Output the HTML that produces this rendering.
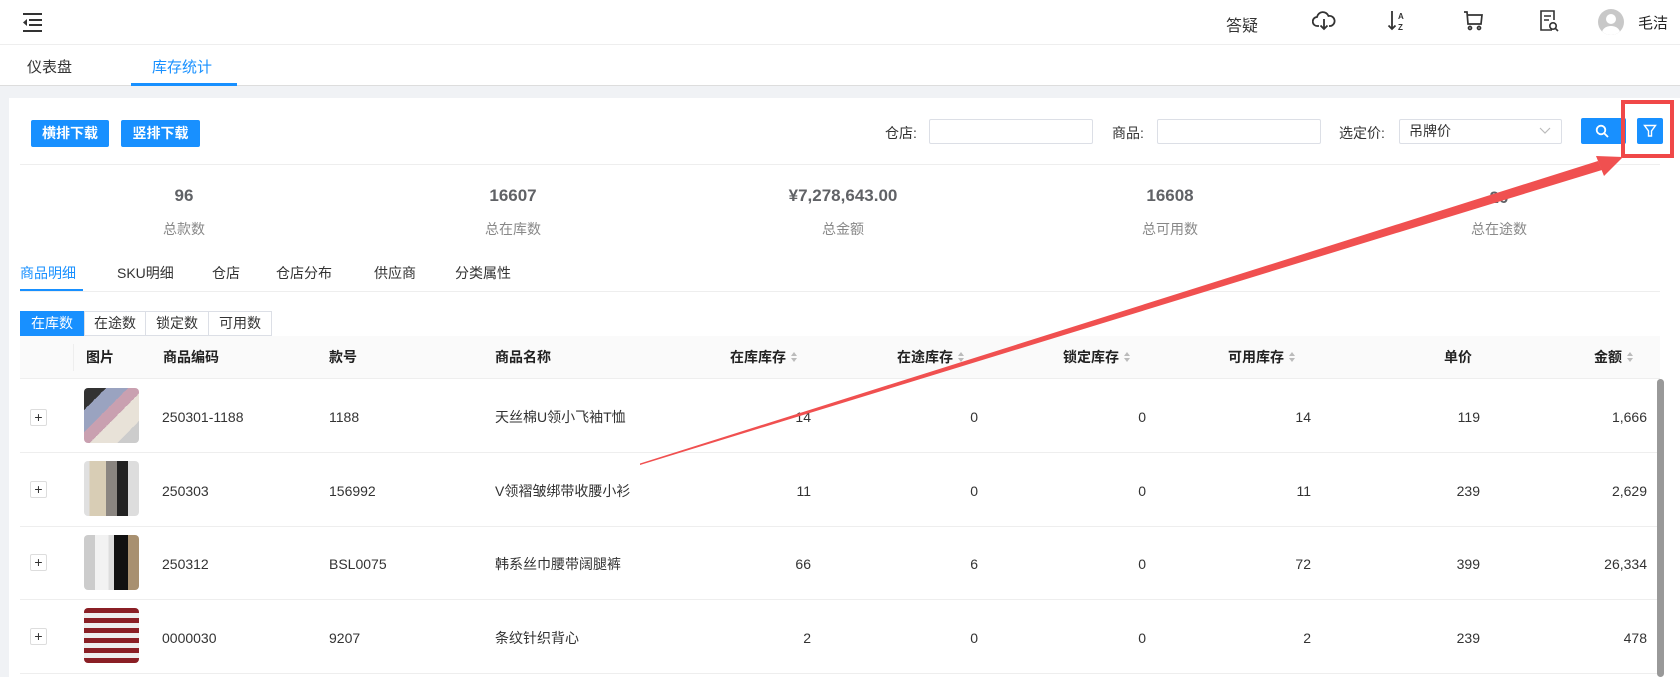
<!DOCTYPE html>
<html><head><meta charset="utf-8"><style>
*{box-sizing:border-box;margin:0;padding:0}
body{width:1680px;height:677px;overflow:hidden;background:#f0f2f5;font-family:"Liberation Sans","Noto Sans CJK SC",sans-serif;font-size:14px;color:#333;position:relative}
.abs{position:absolute}
.top{left:0;top:0;width:1680px;height:45px;background:#fff;border-bottom:1px solid #eee}
.tabs{left:0;top:45px;width:1680px;height:41px;background:#fff;border-bottom:1px solid #ddd}
.card{left:9px;top:98px;width:1671px;height:579px;background:#fff}
.btn{background:#1890ff;color:#fff;height:27px;line-height:27px;text-align:center;border-radius:2px;font-size:14px;font-weight:bold}
.inp{height:25px;border:1px solid #dcdfe6;border-radius:2px;background:#fff}
.lbl{font-size:14px;color:#333}
.num{font-size:17px;color:#606266;font-weight:bold;transform:translateX(-50%)}
.sl{font-size:14px;color:#888;transform:translateX(-50%)}
.st{top:263px;font-size:14px;color:#333}
.seg{top:311px;height:25px;line-height:23px;border:1px solid #dcdfe6;text-align:center;font-size:14px;background:#fff}
.th{top:336px;height:43px;line-height:43px;font-weight:bold;color:#222;font-size:14px}
.td{font-size:14px;color:#333;line-height:20px}
.r{text-align:right}
.sort{display:inline-block;width:8px;vertical-align:middle;margin-left:4px}
.plus{width:17px;height:17px;border:1px solid #ddd;border-radius:2px;font-size:14px;line-height:14px;text-align:center;color:#333}
.img{width:55px;height:55px;border-radius:4px}
.hl{height:1px;background:#eee;left:20px;width:1637px}
</style></head><body>
<div class="abs top"></div>
<svg class="abs" style="left:22px;top:11px" width="22" height="22" viewBox="0 0 22 22"><rect x="1" y="2" width="19" height="2" fill="#333"/><rect x="7" y="8" width="13" height="2" fill="#333"/><rect x="7" y="13" width="13" height="2" fill="#333"/><rect x="1" y="19" width="19" height="2" fill="#333"/><path d="M5 8 L1 11.5 L5 15Z" fill="#333"/></svg>
<div class="abs" style="left:1226px;top:12px;font-size:16px;color:#333">答疑</div>
<svg class="abs" style="left:1312px;top:10px" width="24" height="22" viewBox="0 0 24 22" fill="none" stroke="#333" stroke-width="1.8"><path d="M7 16H5.5A4.5 4.5 0 0 1 5 7a6 6 0 0 1 11.5-1A4.5 4.5 0 0 1 18.5 16H17"/><path d="M12 9v10M8.5 15.5L12 19l3.5-3.5"/></svg>
<svg class="abs" style="left:1387px;top:9px" width="22" height="24" viewBox="0 0 22 24"><path d="M5 2v18M1.5 16.5L5 20l3.5-3.5" stroke="#333" stroke-width="1.8" fill="none"/><text x="11" y="10" font-size="8" font-weight="bold" fill="#333" font-family="Liberation Sans">A</text><text x="11" y="21" font-size="8" font-weight="bold" fill="#333" font-family="Liberation Sans">Z</text></svg>
<svg class="abs" style="left:1463px;top:10px" width="22" height="22" viewBox="0 0 22 22" fill="none" stroke="#333" stroke-width="1.7"><path d="M1 2h3l1 12h13l1-9H5"/><circle cx="7" cy="18" r="1.5"/><circle cx="16" cy="18" r="1.5"/></svg>
<svg class="abs" style="left:1538px;top:9px" width="22" height="24" viewBox="0 0 22 24" fill="none" stroke="#333" stroke-width="1.6"><path d="M14 21H3V2h13v9"/><path d="M6 7h7M6 11h5"/><circle cx="15" cy="17" r="3.2"/><path d="M17.3 19.3L20 22"/></svg>
<div class="abs" style="left:1598px;top:9px;width:26px;height:26px;border-radius:50%;background:#c8c8c8;overflow:hidden"><div class="abs" style="left:8px;top:5px;width:10px;height:10px;border-radius:50%;background:#fff"></div><div class="abs" style="left:4px;top:17px;width:18px;height:14px;border-radius:50%;background:#fff"></div></div>
<div class="abs" style="left:1638px;top:12px;font-size:15px;color:#222">毛洁</div>

<div class="abs tabs"></div>
<div class="abs" style="left:27px;top:56px;font-size:15px;color:#333">仪表盘</div>
<div class="abs" style="left:152px;top:56px;font-size:15px;color:#1890ff">库存统计</div>
<div class="abs" style="left:131px;top:83px;width:106px;height:3px;background:#1890ff"></div>

<div class="abs card"></div>
<div class="abs btn" style="left:31px;top:120px;width:78px">横排下载</div>
<div class="abs btn" style="left:121px;top:120px;width:79px">竖排下载</div>
<div class="abs lbl" style="left:885px;top:123px">仓店:</div>
<div class="abs inp" style="left:929px;top:119px;width:164px"></div>
<div class="abs lbl" style="left:1112px;top:123px">商品:</div>
<div class="abs inp" style="left:1157px;top:119px;width:164px"></div>
<div class="abs lbl" style="left:1339px;top:123px">选定价:</div>
<div class="abs inp" style="left:1399px;top:119px;width:163px;padding-left:9px;line-height:23px">吊牌价<svg class="abs" style="right:10px;top:7px" width="12" height="8" viewBox="0 0 12 8"><path d="M1 1l5 5 5-5" stroke="#bbb" fill="none" stroke-width="1.2"/></svg></div>
<div class="abs btn" style="left:1581px;top:118px;width:45px;height:26px;text-align:left;padding-left:14px"><svg style="margin-top:6px" width="14" height="14" viewBox="0 0 14 14" fill="none" stroke="#fff" stroke-width="1.8"><circle cx="6" cy="6" r="4.3"/><path d="M9.2 9.2L13 13"/></svg></div>
<div class="abs btn" style="left:1637px;top:118px;width:26px;height:26px"><svg style="margin-top:6px" width="14" height="14" viewBox="0 0 14 14" fill="none" stroke="#fff" stroke-width="1.4"><path d="M1.5 1.5h11L8.5 7v5h-3V7z"/></svg></div>
<div class="abs" style="left:1621px;top:100px;width:53px;height:58px;border:4px solid #f04848"></div>
<div class="abs" style="left:20px;top:164px;width:1640px;height:1px;background:#eee"></div>

<div class="abs num" style="left:184px;top:186px">96</div><div class="abs sl" style="left:184px;top:219px">总款数</div>
<div class="abs num" style="left:513px;top:186px">16607</div><div class="abs sl" style="left:513px;top:219px">总在库数</div>
<div class="abs num" style="left:843px;top:186px">¥7,278,643.00</div><div class="abs sl" style="left:843px;top:219px">总金额</div>
<div class="abs num" style="left:1170px;top:186px">16608</div><div class="abs sl" style="left:1170px;top:219px">总可用数</div>
<div class="abs num" style="left:1499px;top:188px">20</div><div class="abs sl" style="left:1499px;top:219px">总在途数</div>

<div class="abs st" style="left:20px;color:#1890ff">商品明细</div>
<div class="abs st" style="left:117px">SKU明细</div>
<div class="abs st" style="left:212px">仓店</div>
<div class="abs st" style="left:276px">仓店分布</div>
<div class="abs st" style="left:374px">供应商</div>
<div class="abs st" style="left:455px">分类属性</div>
<div class="abs" style="left:20px;top:291px;width:1640px;height:1px;background:#eee"></div>
<div class="abs" style="left:20px;top:289px;width:63px;height:2px;background:#1890ff"></div>

<div class="abs seg" style="left:20px;width:64px;background:#1890ff;border-color:#1890ff;color:#fff">在库数</div>
<div class="abs seg" style="left:84px;width:62px">在途数</div>
<div class="abs seg" style="left:146px;width:63px;border-left:none">锁定数</div>
<div class="abs seg" style="left:209px;width:63px;border-left:none">可用数</div>

<div class="abs" style="left:20px;top:336px;width:1640px;height:43px;background:#fafafa;border-bottom:1px solid #eee"></div>
<div class="abs" style="left:73px;top:344px;width:1px;height:27px;background:#eee"></div>
<div class="abs th" style="left:86px">图片</div>
<div class="abs th" style="left:163px">商品编码</div>
<div class="abs th" style="left:329px">款号</div>
<div class="abs th" style="left:495px">商品名称</div>
<div class="abs th" style="left:730px">在库库存<span class="sort"><svg width="8" height="12" viewBox="0 0 8 12"><path d="M4 1L7 5H1z" fill="#bbb"/><path d="M4 11L7 7H1z" fill="#bbb"/></svg></span></div>
<div class="abs th" style="left:897px">在途库存<span class="sort"><svg width="8" height="12" viewBox="0 0 8 12"><path d="M4 1L7 5H1z" fill="#bbb"/><path d="M4 11L7 7H1z" fill="#bbb"/></svg></span></div>
<div class="abs th" style="left:1063px">锁定库存<span class="sort"><svg width="8" height="12" viewBox="0 0 8 12"><path d="M4 1L7 5H1z" fill="#bbb"/><path d="M4 11L7 7H1z" fill="#bbb"/></svg></span></div>
<div class="abs th" style="left:1228px">可用库存<span class="sort"><svg width="8" height="12" viewBox="0 0 8 12"><path d="M4 1L7 5H1z" fill="#bbb"/><path d="M4 11L7 7H1z" fill="#bbb"/></svg></span></div>
<div class="abs th" style="left:1444px">单价</div>
<div class="abs th" style="left:1594px">金额<span class="sort"><svg width="8" height="12" viewBox="0 0 8 12"><path d="M4 1L7 5H1z" fill="#bbb"/><path d="M4 11L7 7H1z" fill="#bbb"/></svg></span></div>
<div class="abs" style="left:1657px;top:379px;width:7px;height:298px;background:#999;border-radius:4px"></div>

<div class="abs hl" style="top:452px"></div><div class="abs hl" style="top:526px"></div><div class="abs hl" style="top:599px"></div><div class="abs hl" style="top:673px"></div>

<div class="abs plus" style="left:30px;top:409px">+</div>
<div class="abs img" style="left:84px;top:388px;background:linear-gradient(135deg,#333 0 20%,#9aa3c0 20% 40%,#c9a0b0 40% 55%,#e8e2d8 55% 80%,#ccc 80%)"></div>
<div class="abs td" style="left:162px;top:407px">250301-1188</div><div class="abs td" style="left:329px;top:407px">1188</div><div class="abs td" style="left:495px;top:407px">天丝棉U领小飞袖T恤</div>
<div class="abs td r" style="right:869px;top:407px">14</div><div class="abs td r" style="right:702px;top:407px">0</div><div class="abs td r" style="right:534px;top:407px">0</div><div class="abs td r" style="right:369px;top:407px">14</div><div class="abs td r" style="right:200px;top:407px">119</div><div class="abs td r" style="right:33px;top:407px">1,666</div>

<div class="abs plus" style="left:30px;top:481px">+</div>
<div class="abs img" style="left:84px;top:461px;background:linear-gradient(90deg,#e0e0e0 0 10%,#d8cdb5 10% 40%,#8a8580 40% 60%,#222 60% 80%,#ddd 80%)"></div>
<div class="abs td" style="left:162px;top:481px">250303</div><div class="abs td" style="left:329px;top:481px">156992</div><div class="abs td" style="left:495px;top:481px">V领褶皱绑带收腰小衫</div>
<div class="abs td r" style="right:869px;top:481px">11</div><div class="abs td r" style="right:702px;top:481px">0</div><div class="abs td r" style="right:534px;top:481px">0</div><div class="abs td r" style="right:369px;top:481px">11</div><div class="abs td r" style="right:200px;top:481px">239</div><div class="abs td r" style="right:33px;top:481px">2,629</div>

<div class="abs plus" style="left:30px;top:554px">+</div>
<div class="abs img" style="left:84px;top:535px;background:linear-gradient(90deg,#ccc 0 20%,#f2f2f2 20% 45%,#ddd 45% 55%,#111 55% 80%,#a89070 80%)"></div>
<div class="abs td" style="left:162px;top:554px">250312</div><div class="abs td" style="left:329px;top:554px">BSL0075</div><div class="abs td" style="left:495px;top:554px">韩系丝巾腰带阔腿裤</div>
<div class="abs td r" style="right:869px;top:554px">66</div><div class="abs td r" style="right:702px;top:554px">6</div><div class="abs td r" style="right:534px;top:554px">0</div><div class="abs td r" style="right:369px;top:554px">72</div><div class="abs td r" style="right:200px;top:554px">399</div><div class="abs td r" style="right:33px;top:554px">26,334</div>

<div class="abs plus" style="left:30px;top:628px">+</div>
<div class="abs img" style="left:84px;top:608px;background:repeating-linear-gradient(0deg,#8a1f25 0 5px,#eee 5px 10px)"></div>
<div class="abs td" style="left:162px;top:628px">0000030</div><div class="abs td" style="left:329px;top:628px">9207</div><div class="abs td" style="left:495px;top:628px">条纹针织背心</div>
<div class="abs td r" style="right:869px;top:628px">2</div><div class="abs td r" style="right:702px;top:628px">0</div><div class="abs td r" style="right:534px;top:628px">0</div><div class="abs td r" style="right:369px;top:628px">2</div><div class="abs td r" style="right:200px;top:628px">239</div><div class="abs td r" style="right:33px;top:628px">478</div>

<svg class="abs" style="left:0;top:0" width="1680" height="677" viewBox="0 0 1680 677"><polygon points="640,465 1602,170 1598,161 640,463.5" fill="#f05050"/><polygon points="1623,157 1596,156 1604,176" fill="#f05050"/></svg>
</body></html>
